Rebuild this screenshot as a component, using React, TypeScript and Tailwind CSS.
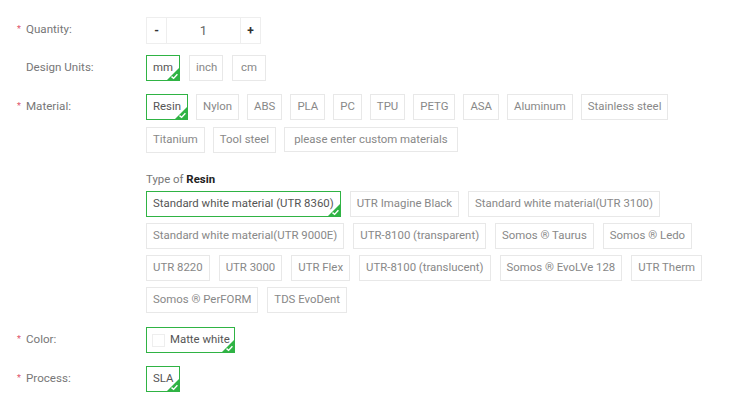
import React, { useState } from 'react';

const materials = ['Resin', 'Nylon', 'ABS', 'PLA', 'PC', 'TPU', 'PETG', 'ASA', 'Aluminum', 'Stainless steel', 'Titanium', 'Tool steel'];

const resinTypes = [
  'Standard white material (UTR 8360)',
  'UTR Imagine Black',
  'Standard white material(UTR 3100)',
  'Standard white material(UTR 9000E)',
  'UTR-8100 (transparent)',
  'Somos ® Taurus',
  'Somos ® Ledo',
  'UTR 8220',
  'UTR 3000',
  'UTR Flex',
  'UTR-8100 (translucent)',
  'Somos ® EvoLVe 128',
  'UTR Therm',
  'Somos ® PerFORM',
  'TDS EvoDent',
];

function Check() {
  return (
    <span className="absolute right-0 bottom-0 w-[12px] h-[12px]">
      <svg width="12" height="12" viewBox="0 0 12 12">
        <polygon points="12,0 12,12 0,12" fill="#2fb344" />
        <path d="M4.5 8.6 L6.6 10.4 L10.4 6.2" stroke="#fff" strokeWidth="1.4" fill="none" />
      </svg>
    </span>
  );
}

function Option({ label, active, onClick, className }: { label: React.ReactNode; active?: boolean; onClick?: () => void; className?: string }) {
  return (
    <button
      onClick={onClick}
      className={`relative h-[26px] px-[6px] text-[11.4px] leading-none whitespace-nowrap bg-white ${active ? 'border-[1.5px] border-[#2fb344] text-[#555]' : 'border border-[#e8e8e8] text-[#888]'} ${className || ''}`}
    >
      {label}
      {active && <Check />}
    </button>
  );
}

function Label({ text, required }: { text: string; required?: boolean }) {
  return (
    <div className="w-[146px] shrink-0 flex items-center h-[26px] text-[11.6px] text-[#777]">
      <span className="w-[8px] ml-[17px] text-[#e0556b] text-[9px]">{required ? '*' : ''}</span>
      <span className="ml-[1px]">{text}</span>
    </div>
  );
}

export default function App() {
  const [qty, setQty] = useState(1);
  const [unit, setUnit] = useState('mm');
  const [material, setMaterial] = useState('Resin');
  const [resin, setResin] = useState(resinTypes[0]);

  return (
    <div className="w-[740px] h-[396px] bg-white overflow-hidden" style={{ fontFamily: 'Roboto, "Liberation Sans", sans-serif' }}>
      <div className="pt-[17px] flex flex-col">
        {/* Quantity */}
        <div className="flex">
          <Label text="Quantity:" required />
          <div className="flex h-[27px] border border-[#eee] text-[12px] text-[#333]">
            <button onClick={() => setQty(Math.max(1, qty - 1))} className="w-[19px] font-bold">-</button>
            <div className="w-[75px] border-x border-[#eee] flex items-center justify-center text-[#666] text-[13px]">{qty}</div>
            <button onClick={() => setQty(qty + 1)} className="w-[19px] font-bold">+</button>
          </div>
        </div>

        {/* Design Units */}
        <div className="flex mt-[11px]">
          <Label text="Design Units:" />
          <div className="flex gap-[9px]">
            {['mm', 'inch', 'cm'].map(u => (
              <Option key={u} label={u} active={unit === u} onClick={() => setUnit(u)} className="w-[34px] px-0" />
            ))}
          </div>
        </div>

        {/* Material */}
        <div className="flex mt-[13px]">
          <Label text="Material:" required />
          <div className="w-[560px]">
            <div className="flex flex-wrap gap-x-[8px] gap-y-[7px]">
              {materials.map(m => (
                <Option key={m} label={m} active={material === m} onClick={() => setMaterial(m)} className="h-[25px] px-[6px]" />
              ))}
              <div className="h-[25px] px-[9px] border border-[#e8e8e8] text-[11.4px] text-[#888] flex items-center">please enter custom materials</div>
            </div>

            <div className="mt-[18px] leading-[17px] text-[11.4px] text-[#777]">
              Type of <span className="font-bold text-[#222]">{material}</span>
            </div>
            <div className="mt-[3px] flex flex-wrap gap-x-[9px] gap-y-[6px]">
              {resinTypes.map(r => (
                <Option key={r} label={r} active={resin === r} onClick={() => setResin(r)} className="px-[6px]" />
              ))}
            </div>
          </div>
        </div>

        {/* Color */}
        <div className="flex mt-[14px]">
          <Label text="Color:" required />
          <button className="relative h-[26px] w-[89px] border-[1.5px] border-[#2fb344] flex items-center pl-[5px] text-[11.4px] text-[#555] whitespace-nowrap">
            <span className="w-[13px] h-[13px] border border-[#eee] bg-white mr-[5px] shrink-0"></span>
            Matte white
            <Check />
          </button>
        </div>

        {/* Process */}
        <div className="flex mt-[13px]">
          <Label text="Process:" required />
          <Option label="SLA" active className="w-[34px] px-0" />
        </div>
      </div>
    </div>
  );
}
